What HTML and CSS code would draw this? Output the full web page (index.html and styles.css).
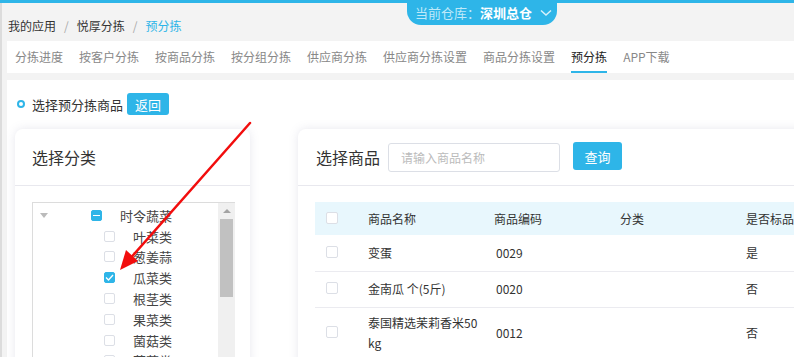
FILE: index.html
```html
<!DOCTYPE html>
<html lang="zh">
<head>
<meta charset="utf-8">
<link rel="stylesheet" href="styles.css">
</head>
<body>
<div class="topbar"></div>
<div class="warehouse"><span class="wh-label">当前仓库：</span><span class="wh-name">深圳总仓</span><svg class="wh-chev" width="12" height="8" viewBox="0 0 12 8"><path d="M1 1.5 L6 6 L11 1.5" fill="none" stroke="#d8f1fb" stroke-width="1.5"/></svg></div>
<div class="page">
  <div class="crumbs"><span>我的应用</span><span class="sep">/</span><span>悦厚分拣</span><span class="sep">/</span><span class="cur">预分拣</span></div>
  <nav class="tabs">
    <span class="tab">分拣进度</span>
    <span class="tab">按客户分拣</span>
    <span class="tab">按商品分拣</span>
    <span class="tab">按分组分拣</span>
    <span class="tab">供应商分拣</span>
    <span class="tab">供应商分拣设置</span>
    <span class="tab">商品分拣设置</span>
    <span class="tab active">预分拣</span>
    <span class="tab">APP下载</span>
  </nav>
  <main class="content">
    <div class="head">
      <span class="dot"></span>
      <span class="head-title">选择预分拣商品</span>
      <button class="btn small">返回</button>
    </div>
    <div class="cards">
      <section class="card left">
        <div class="card-title">选择分类</div>
        <div class="card-body">
          <div class="tree">
            <div class="tree-list">
              <div class="row parent"><span class="caret"></span><span class="cb ind"></span><span class="lbl">时令蔬菜</span></div>
              <div class="row child"><span class="cb"></span><span class="lbl">叶菜类</span></div>
              <div class="row child"><span class="cb"></span><span class="lbl">葱姜蒜</span></div>
              <div class="row child"><span class="cb on"><svg width="9" height="7" viewBox="0 0 9 7"><path d="M1 3.5 L3.5 6 L8 1" fill="none" stroke="#fff" stroke-width="1.3"/></svg></span><span class="lbl">瓜菜类</span></div>
              <div class="row child"><span class="cb"></span><span class="lbl">根茎类</span></div>
              <div class="row child"><span class="cb"></span><span class="lbl">果菜类</span></div>
              <div class="row child"><span class="cb"></span><span class="lbl">菌菇类</span></div>
              <div class="row child"><span class="cb"></span><span class="lbl">花菜类</span></div>
            </div>
            <div class="sbar"><span class="sarrow"></span><span class="sthumb"></span></div>
          </div>
        </div>
      </section>
      <section class="card right">
        <div class="card-title">选择商品<input class="search" placeholder="请输入商品名称"><button class="btn query">查询</button></div>
        <div class="card-body">
          <table class="goods">
            <thead>
              <tr><th class="c0"><span class="cb"></span></th><th class="c1">商品名称</th><th class="c2">商品编码</th><th class="c3">分类</th><th class="c4">是否标品</th></tr>
            </thead>
            <tbody>
              <tr><td class="c0"><span class="cb"></span></td><td class="c1">变蛋</td><td class="c2">0029</td><td class="c3"></td><td class="c4">是</td></tr>
              <tr><td class="c0"><span class="cb"></span></td><td class="c1">金南瓜 个(5斤)</td><td class="c2">0020</td><td class="c3"></td><td class="c4">否</td></tr>
              <tr><td class="c0"><span class="cb"></span></td><td class="c1 wrap">泰国精选茉莉香米50kg</td><td class="c2">0012</td><td class="c3"></td><td class="c4">否</td></tr>
            </tbody>
          </table>
        </div>
      </section>
    </div>
  </main>
</div>
<svg class="arrow" width="794" height="357" viewBox="0 0 794 357">
  <line x1="250" y1="123" x2="128" y2="261" stroke="#f20d0d" stroke-width="2.5" stroke-linecap="round"/>
  <polygon points="120,270 126,250 138,261" fill="#f20d0d"/>
</svg>
</body>
</html>
```
FILE: styles.css
```css
* { box-sizing: border-box; }
html, body { margin: 0; padding: 0; }
body {
  width: 794px;
  height: 357px;
  overflow: hidden;
  background: #f3f3f3;
  font-family: "Noto Sans CJK SC", "Noto Sans", sans-serif;
  color: #333;
  position: relative;
}
.topbar { height: 3px; background: #2eb5e8; }
.warehouse {
  position: absolute;
  top: 0;
  left: 407px;
  width: 150px;
  height: 25px;
  background: #2eb5e8;
  border-radius: 0 0 14px 14px;
  display: flex;
  align-items: center;
  padding-left: 8px;
  font-size: 13px;
  line-height: 1;
  white-space: nowrap;
}
.wh-label { color: #bfe9f9; }
.wh-name { color: #fff; font-weight: bold; }
.wh-chev { margin-left: 8px; flex: none; }
.page { border-left: 2px solid #dcdcdc; height: 354px; display: flex; flex-direction: column; overflow: hidden; }
.crumbs {
  flex: none;
  height: 38px;
  padding: 15px 0 0 6px;
  font-size: 12px;
  line-height: 16px;
  color: #333;
}
.crumbs .sep { color: #aaa; margin: 0 8px; }
.crumbs .cur { color: #2eb5e8; }
.tabs {
  flex: none;
  margin-left: 5px;
  height: 32px;
  background: #fff;
  display: flex;
}
.tab {
  padding: 0 8px;
  font-size: 12px;
  color: #888;
  line-height: 32px;
  position: relative;
  white-space: nowrap;
}
.tab.active { color: #222; }
.tab.active::after {
  content: "";
  position: absolute;
  left: 8px;
  right: 8px;
  bottom: 0;
  height: 2px;
  background: #2eb5e8;
}
.content {
  flex: none;
  margin: 7px 0 0 5px;
  background: #fff;
  height: 300px;
  padding: 13px 0 0 8px;
}
.head { display: flex; align-items: center; height: 22px; }
.dot {
  width: 8px; height: 8px;
  border: 2px solid #2eb5e8;
  border-radius: 50%;
  margin: 0 7px 0 2px;
}
.head-title { font-size: 13px; color: #333; }
.btn {
  background: #2eb5e8;
  color: #fff;
  border: none;
  border-radius: 3px;
  font-family: inherit;
  font-size: 13px;
  padding: 0;
}
.btn.small { width: 42px; height: 22px; margin-left: 4px; }
.cards { display: flex; gap: 48px; margin-top: 14px; }
.card {
  background: #fff;
  border-radius: 8px;
  box-shadow: 0 0 10px rgba(120, 120, 160, 0.18);
  height: 240px;
}
.card.left { width: 235px; flex: none; }
.card.right { flex: 1; margin-right: -40px; }
.card-title {
  height: 57px;
  border-bottom: 1px solid #e8e8ee;
  display: flex;
  align-items: center;
  font-size: 16px;
  color: #333;
  padding-left: 17px;
}
.card.right .card-title { padding-left: 18px; }
.card-body { padding: 16px 15px 0 17px; }
.tree {
  border: 1px solid #dcdcdc;
  border-right: none;
  height: 200px;
  display: flex;
}
.tree-list { flex: 1; padding-top: 2px; }
.row { height: 20.8px; display: flex; align-items: center; font-size: 13px; color: #444; }
.caret {
  width: 0; height: 0;
  border-left: 4px solid transparent;
  border-right: 4px solid transparent;
  border-top: 5px solid #bbb;
  margin: 0 0 0 7px;
}
.parent .cb { margin-left: 43px; }
.parent .lbl { margin-left: 18px; }
.child .cb { margin-left: 71px; }
.child .lbl { margin-left: 18px; }
.cb {
  width: 11px; height: 11px;
  border: 1px solid #dcdfe6;
  border-radius: 2px;
  background: #fff;
  display: inline-flex;
  align-items: center;
  justify-content: center;
  flex: none;
}
.cb.on { background: #2eb5e8; border-color: #2eb5e8; }
.cb.ind { background: #2eb5e8; border-color: #2eb5e8; }
.cb.ind::after { content: ""; width: 7px; height: 1.5px; background: #fff; }
.sbar {
  width: 17px;
  background: #f0f0f0;
  display: flex;
  flex-direction: column;
  align-items: center;
}
.sarrow {
  margin-top: 6px;
  width: 0; height: 0;
  border-left: 4px solid transparent;
  border-right: 4px solid transparent;
  border-bottom: 4px solid #a3a3a3;
}
.sthumb { margin-top: 6px; width: 13px; height: 78px; background: #c1c1c1; }
.search {
  margin-left: 8px;
  width: 172px;
  height: 29px;
  border: 1px solid #dcdfe6;
  border-radius: 3px;
  padding: 0 12px;
  font-family: inherit;
  font-size: 12px;
  color: #333;
}
.search::placeholder { color: #bbb; }
.btn.query { width: 49px; height: 28px; margin-left: 13px; margin-top: -2px; font-size: 13px; }
.card.right .card-body { padding: 16px 0 0 17px; }
.goods { border-collapse: collapse; font-size: 12px; color: #333; table-layout: fixed; width: 560px; }
.goods th { background: #e8f7fd; height: 33px; font-weight: normal; text-align: left; }
.goods td { height: 36px; border-bottom: 1px solid #ebebf0; text-align: left; line-height: 14px; }
.goods tbody tr:last-child td { height: 52px; border-bottom: none; }
.goods td.wrap { word-break: break-all; line-height: 20px; }
.c0 { width: 52px; padding-left: 11px; }
.c0 .cb { width: 12px; height: 12px; }
.c1 { width: 126px; padding-right: 12px; }
.c2 { width: 126px; }
.goods td.c2 { padding-left: 3px; }
.c3 { width: 126px; }
.c4 { width: 130px; }
.arrow { position: absolute; left: 0; top: 0; pointer-events: none; }
```
